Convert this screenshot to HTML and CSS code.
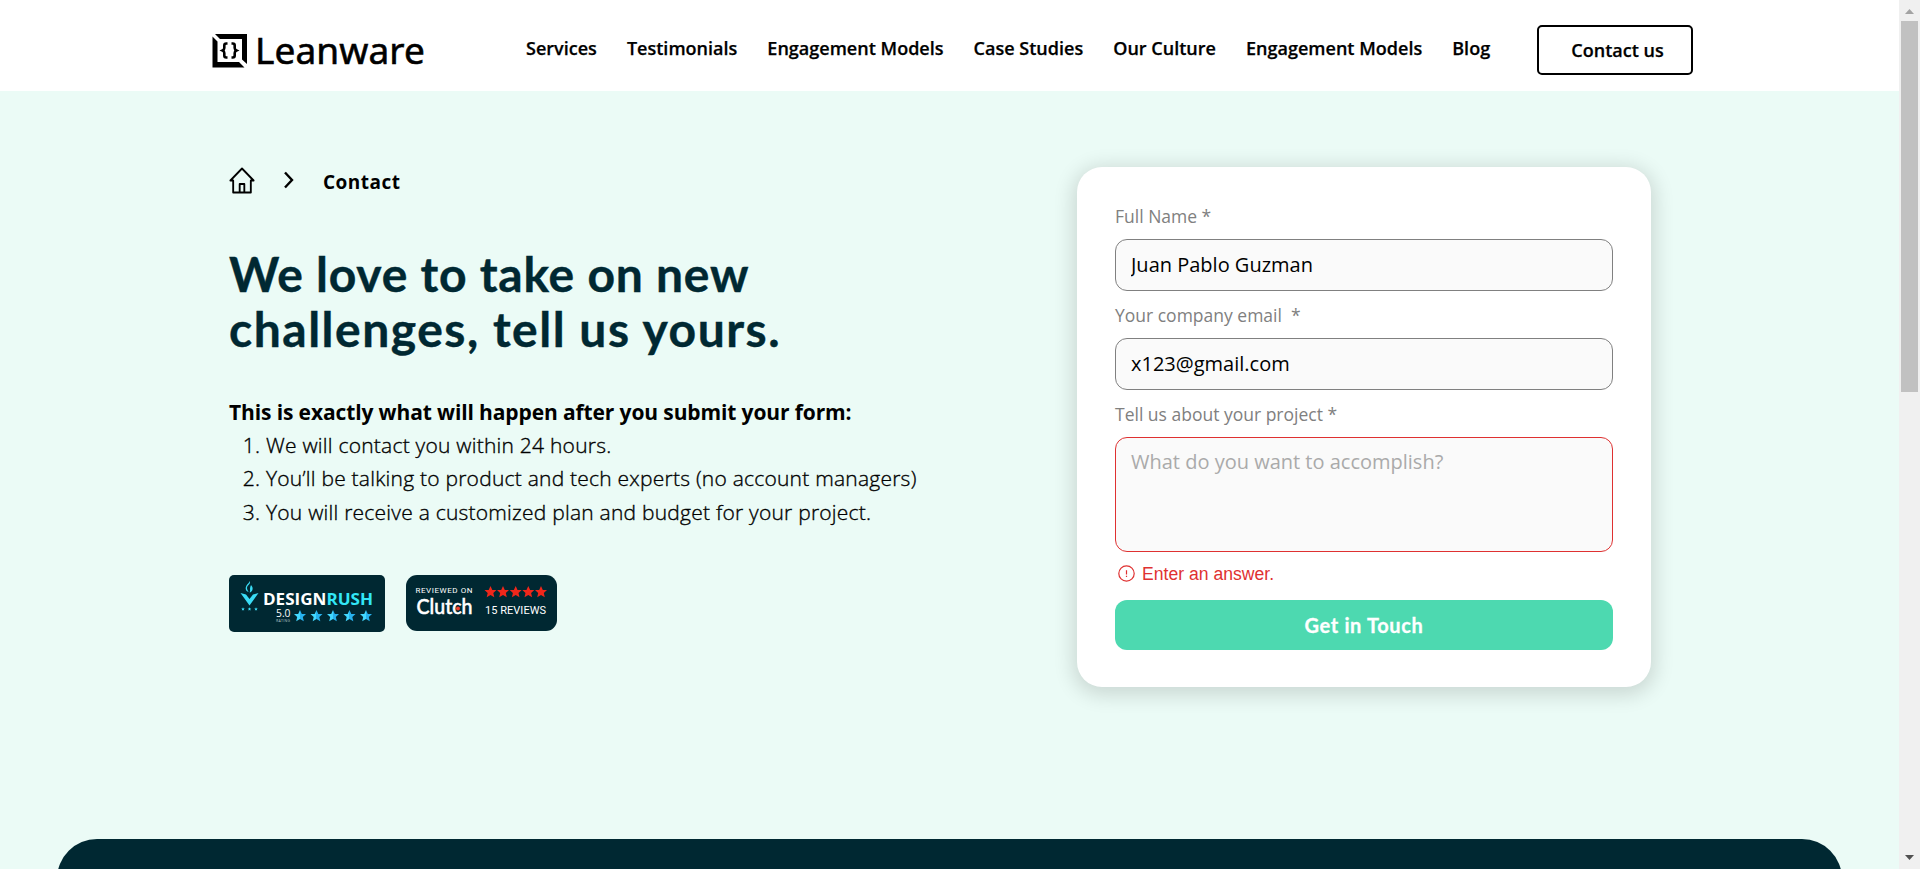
FILE: index.html
```
<!DOCTYPE html>
<html lang="en">
<head>
<meta charset="utf-8">
<title>Contact | Leanware</title>
<link rel="stylesheet" href="styles.css">
</head>
<body>
<svg class="defs" width="0" height="0" aria-hidden="true">
  <defs>
    <linearGradient id="aqua" x1="0" x2="1"><stop offset="0.5" stop-color="#42d8ff"/><stop offset="0.5" stop-color="#27b2ee"/></linearGradient>
    <path id="star" d="M0-6 1.8-2 6-1.9 2.800 1 3.8 5.3 0 3.100-3.8 5.3-2.800 1-6-1.9-1.8-2Z"/>
  </defs>
</svg>
<div class="window">
  <div class="page">
    <header class="header">
      <a class="logo">
        <svg width="36" height="36" viewBox="0 0 36 36">
          <path d="M3 1H35V31L30 26.500V6H8ZM0.500 3.500 5.500 8.500V29H27L32.500 34.500H.5Z"/>
          <path d="M15.500 10.500h-1.200c-1.500 0-2 .8-2 2v2.500c0 1.200-.6 2-1.700 2.500 1.100.5 1.700 1.300 1.700 2.500v2.500c0 1.200.5 2 2 2h1.200M19.500 10.500h1.200c1.500 0 2 .8 2 2v2.500c0 1.200.6 2 1.700 2.500-1.100.5-1.700 1.300-1.700 2.500v2.500c0 1.200-.5 2-2 2h-1.200" fill="none" stroke="#000" stroke-width="2.600"/>
        </svg>
        <span class="logo-name">Leanware</span>
      </a>
      <nav class="nav">
        <a>Services</a><a>Testimonials</a><a>Engagement Models</a><a>Case Studies</a><a>Our Culture</a><a>Engagement Models</a><a>Blog</a>
      </nav>
      <a class="contact-button">Contact us</a>
    </header>
    <main class="hero">
      <section class="intro">
        <div class="crumbs">
          <svg width="26" height="28" viewBox="0 0 28 28" preserveAspectRatio="none" fill="none" stroke="#000" stroke-width="2" stroke-linejoin="round" stroke-linecap="round"><path d="M4.500 13.500H1.500L14 1.500 26.500 13.500H23.500V25.500H4.500ZM11.500 25.500V17H16.500V25.500"/></svg>
          <svg class="chevron" width="12" height="18" viewBox="0 0 12 18" fill="none" stroke="#000" stroke-width="2.400"><path d="M2 1.500 9 9 2 16.500"/></svg>
          <span>Contact</span>
        </div>
        <h1 class="title"><span class="title-a">We love to take on new</span><br><span class="title-b">challenges, tell us yours.</span></h1>
        <p class="lead">This is exactly what will happen after you submit your form:</p>
        <ol class="steps">
          <li>We will contact you within 24 hours.</li>
          <li>You’ll be talking to product and tech experts (no account managers)</li>
          <li>You will receive a customized plan and budget for your project.</li>
        </ol>
        <div class="badges">
          <svg width="156" height="57" viewBox="0 0 156 57">
            <rect width="156" height="57" rx="5" fill="#002832"/>
            <g fill="#3adcf5">
              <path d="M20.500 6c2 3-2.500 4-2.500 7 0 2 1.500 3 1.500 4-3-1-3.500-4-2-6.500 1-1.700 3-2.500 3-4.500ZM22 10c3 3 1.500 7-1.500 7.500 1.500-2.500-.5-3 1.500-7.500Z"/>
              <path d="M11.500 18 17 19.500 20.500 24 24 19.500 29.500 18 20.500 30.500Z"/>
              <use href="#star" transform="translate(14 34) scale(.3)"/><use href="#star" transform="translate(20.500 34) scale(.3)"/><use href="#star" transform="translate(27 34) scale(.3)"/>
            </g>
            <text x="34" y="29.500" class="rush" textLength="110" lengthAdjust="spacingAndGlyphs" fill="#fff">DESIGN<tspan fill="#32e7f7">RUSH</tspan></text>
            <text x="47" y="42" class="score" textLength="14.500" lengthAdjust="spacingAndGlyphs">5.0</text>
            <text x="47" y="47" class="rating" textLength="14">RATING</text>
            <g fill="url(#aqua)"><use href="#star" x="71" y="41"/><use href="#star" x="87.500" y="41"/><use href="#star" x="104" y="41"/><use href="#star" x="120.500" y="41"/><use href="#star" x="137" y="41"/></g>
          </svg>
          <svg width="151" height="56" viewBox="0 0 151 56">
            <rect width="151" height="56" rx="11" fill="#002832"/>
            <text x="9.500" y="18" class="reviewed" textLength="57">REVIEWED ON</text>
            <text x="10.500" y="39" class="clutch" textLength="56" lengthAdjust="spacingAndGlyphs">Clutch</text>
            <circle cx="52" cy="33.500" r="2" fill="#f3402f"/>
            <g fill="#f0271b"><use href="#star" x="84.500" y="17"/><use href="#star" x="97" y="17"/><use href="#star" x="109.700" y="17"/><use href="#star" x="122.300" y="17"/><use href="#star" x="135" y="17"/></g>
            <text x="79" y="39" class="reviews" textLength="61">15 REVIEWS</text>
          </svg>
        </div>
      </section>
      <form class="card">
        <label class="label" for="name">Full Name *</label>
        <input class="field" id="name" value="Juan Pablo Guzman">
        <label class="label" for="email">Your company email &nbsp;*</label>
        <input class="field" id="email" value="x123@gmail.com">
        <label class="label" for="project">Tell us about your project *</label>
        <textarea class="field field-error" id="project" placeholder="What do you want to accomplish?"></textarea>
        <div class="error">
          <svg width="17" height="17" viewBox="0 0 17 17" fill="none" stroke="#df3131" stroke-width="1.200"><circle cx="8.500" cy="8.500" r="7.700"/><path d="M8.500 5.200V9.500M8.500 10.800V12"/></svg>
          <span>Enter an answer.</span>
        </div>
        <button class="submit" type="button">Get in Touch</button>
      </form>
    </main>
    <div class="footer-panel"></div>
  </div>
  <div class="scrollbar">
    <svg width="9" height="5" viewBox="0 0 9 5"><path d="M0 5 4.500 0 9 5Z" fill="#a3a3a3"/></svg>
    <div class="thumb"></div>
    <svg width="9" height="5" viewBox="0 0 9 5"><path d="M0 0 4.500 5 9 0Z" fill="#505050"/></svg>
  </div>
</div>
</body>
</html>
```
FILE: styles.css
```
* { box-sizing: border-box; }
body { margin: 0; overflow: hidden; font-family: "Open Sans", sans-serif; color: #000; }
.defs { display: block; }
.window { display: flex; height: 869px; }
.page { display: flex; flex-direction: column; width: 1899px; background: #ebfbf6; overflow: hidden; }
.header { display: flex; height: 91px; flex: none; padding-left: 212px; background: #fff; }
.logo { display: flex; width: 314px; padding-top: 33px; }
.logo-name { margin: -7px 0 0 7px; font: 37px/48px "Noto Sans", sans-serif; letter-spacing: 0.1px; white-space: nowrap; -webkit-text-stroke: 0.6px #000; }
.nav { display: flex; gap: 30px; width: 1011px; padding-top: 36px; font-size: 18px; font-weight: 600; line-height: 25px; letter-spacing: 0.015px; white-space: nowrap; -webkit-text-stroke: 0.25px #000; }
.contact-button { width: 156px; height: 50px; margin-top: 25px; padding-left: 5px; border: 2px solid #000; border-radius: 5px; font-size: 18px; font-weight: 600; line-height: 47px; text-align: center; white-space: nowrap; -webkit-text-stroke: 0.25px #000; }
.hero { display: flex; height: 748px; flex: none; padding: 76px 0 0 229px; }
.intro { width: 848px; }
.crumbs { display: flex; height: 28px; font-size: 19px; font-weight: 700; line-height: 30px; letter-spacing: 0.5px; }
.chevron { margin: 4px 28px 0 28px; }
.title { margin: 51px 0 0; color: #002832; font: bold 48px/55px Lato, sans-serif; white-space: nowrap; -webkit-text-stroke: 0.4px #002832; }
.title-a { letter-spacing: 0.76px; }
.title-b { letter-spacing: 1.52px; }
.lead { margin: 40px 0 0; font-size: 21px; font-weight: 700; line-height: 33px; letter-spacing: -0.12px; white-space: nowrap; }
.steps { margin: 0; padding-left: 37px; font-size: 21px; font-weight: 300; line-height: 33.300px; letter-spacing: 0.23px; white-space: nowrap; -webkit-text-stroke: 0.35px #000; }
.badges { display: flex; gap: 21px; margin-top: 46px; }
.rush { font: bold 16px "Open Sans", sans-serif; }
.score { font: 10px "Open Sans", sans-serif; fill: #fff; }
.rating { font: 3.500px "Open Sans", sans-serif; fill: #b5c3c6; }
.reviewed { font: 8px Roboto, sans-serif; fill: #fff; }
.clutch { font: 500 21px Lato, sans-serif; fill: #fff; stroke: #fff; stroke-width: 0.5px; }
.reviews { font: 11px Roboto, sans-serif; fill: #fff; }
.card { display: flex; flex-direction: column; width: 574px; height: 520px; padding: 36px 38px 0; border-radius: 25px; background: #fff; box-shadow: 0 4px 20px 4px rgba(0, 0, 0, 0.14); }
.label { height: 36px; color: #808080; font-size: 17.500px; line-height: 27px; }
.field { height: 52px; flex: none; margin: 0 0 11px; padding: 0 15px 2px; border: 1px solid #808080; border-radius: 12px; background: #fafafa; color: #000; font: 20px/28px "Open Sans", sans-serif; outline: none; resize: none; }
.field-error { height: 115px; margin: 0; padding-top: 10px; border-color: #df3131; }
.field::placeholder { color: #aaa; opacity: 1; }
.error { display: flex; gap: 7px; height: 48px; flex: none; padding: 13px 0 0 3px; color: #df3131; font: 17.600px/18px "Liberation Sans", sans-serif; }
.submit { height: 50px; flex: none; border: 0; border-radius: 12px; background: #4dd9b0; color: #fff; font: bold 20px Lato, sans-serif; letter-spacing: 0.65px; -webkit-text-stroke: 0.3px #fff; }
.footer-panel { width: 1785px; height: 80px; flex: none; margin-left: 57px; border-radius: 40px; background: #002832; }
.scrollbar { display: flex; flex-direction: column; align-items: center; width: 21px; padding: 9px 0 9px; background: #f0f0f0; }
.thumb { width: 17px; height: 371px; margin: 7px 0 auto; background: #c1c1c1; }
```
